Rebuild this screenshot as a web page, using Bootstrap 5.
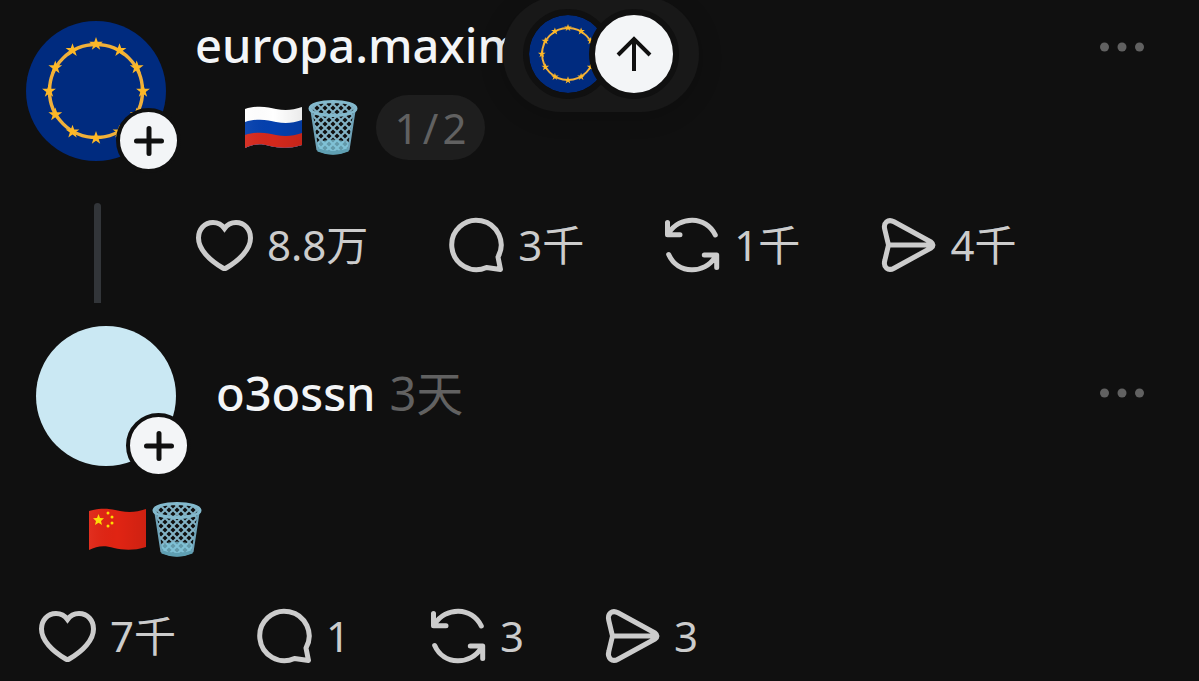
<!DOCTYPE html>
<html lang="zh-CN" data-bs-theme="dark">
<head>
<meta charset="utf-8">
<meta name="viewport" content="width=device-width, initial-scale=1">
<title>europa.maxim</title>
<link href="https://cdn.jsdelivr.net/npm/bootstrap@5.3.0/dist/css/bootstrap.min.css" rel="stylesheet">
<style>
  body { background: #101010; color: #f3f5f7; font-family: "Noto Sans", "Noto Sans CJK SC", sans-serif; overflow-x: hidden; }
  .post { padding: 21px 47px 0 26px; }
  .reply { padding: 23px 47px 0 36px; }
  .avatar { width: 140px; height: 140px; flex: none; }
  .avatar > svg, .avatar-plain { width: 140px; height: 140px; display: block; border-radius: 50%; }
  .avatar-plain { background: #cae8f3; }
  .follow { right: -15px; bottom: -12px; width: 65px; height: 65px; border: 4px solid #101010; background: #f3f5f7; border-radius: 50%; color: #101010; }
  .thread-line { width: 7px; margin: 42px 0 0 68px; background: #323539; border-radius: 4px 4px 0 0; }
  .post-body { padding: 0 0 28px 29px; }
  .handle, .age { font-size: 47px; line-height: 48px; }
  .handle { color: #f3f5f7; font-weight: 500; text-decoration: none; }
  .age { color: #616161; margin-left: 14px; }
  .more { height: 52px; color: #616161; }
  .reply-head { padding: 0 0 6px 40px; }
  .emoji-row { gap: 6px; height: 65px; }
  .post .emoji-row { margin: 22px 0 55px; padding-left: 50px; }
  .reply .emoji-row { margin: 31px 0 44px; padding-left: 53px; }
  .counter { background: #1e1e1e; color: #616161; font-size: 42px; line-height: 65px; width: 109px; margin-left: 12px; }
  .actions { gap: 78px; height: 60px; }
  .reply .actions { padding-left: 2px; }
  .action { color: #ccc; font-size: 42px; line-height: 60px; gap: 12px; }
  .action svg { width: 60px; height: 60px; fill: none; stroke: currentColor; stroke-width: 5; stroke-linecap: round; stroke-linejoin: round; flex: none; }
  .jump { top: -4px; left: 1px; height: 116px; padding: 0 20px; background: #181818; box-shadow: 0 4px 24px #0003; }
  .jump-disc { width: 90px; height: 90px; border: 6px solid #101010; border-radius: 50%; background: #101010; overflow: hidden; }
  .jump-disc svg { width: 78px; height: 78px; border-radius: 50%; display: block; }
  .jump-up { margin-left: -24px; background: #f3f5f7; color: #101010; }
</style>
</head>
<body>
<svg width="0" height="0" class="position-absolute" aria-hidden="true">
  <defs>
    <path id="star" fill="#fdb827" d="M0-7 1.7-2.2 6.9-2.2 2.7.9 4.2 5.8 0 2.8-4.2 5.8-2.7.9-6.9-2.2-1.7-2.2Z"/>
    <symbol id="eu" viewBox="0 0 140 140">
      <path fill="#002b7f" d="M0 0h140v140H0z"/>
      <circle cx="70" cy="70" r="46.500" fill="none" stroke="#f0b03a" stroke-width="3.500"/>
      <use href="#star" x="70" y="23"/><use href="#star" x="93.500" y="29.300"/><use href="#star" x="110.700" y="46.500"/>
      <use href="#star" x="117" y="70"/><use href="#star" x="110.700" y="93.500"/><use href="#star" x="93.500" y="110.700"/>
      <use href="#star" x="70" y="117"/><use href="#star" x="46.500" y="110.700"/><use href="#star" x="29.300" y="93.500"/>
      <use href="#star" x="23" y="70"/><use href="#star" x="29.300" y="46.500"/><use href="#star" x="46.500" y="29.300"/>
    </symbol>
    <symbol id="heart" viewBox="0 0 60 60"><path stroke-linejoin="miter" d="M29.500 13.500C26.500 9.200 22 7.500 18 7.500 9.500 7.500 3.500 14.300 3.500 23 3.500 34 14 45 27.800 53Q29.500 54 31.200 53C45 45 55.500 34 55.500 23 55.500 14.300 49.500 7.500 41 7.500 37 7.500 32.500 9.200 29.500 13.500Z"/></symbol>
    <symbol id="bubble" viewBox="0 0 60 60"><path d="M52 42A24.700 24.700 0 1 0 40.500 52.500L54.500 54.500Z"/></symbol>
    <symbol id="repost" viewBox="0 0 60 60"><path d="M5.500 7.500V19.800H18M6.500 18.500C17 .500 44.500 .500 53.300 20M54.700 52.500V40H42.300M53.500 41.500C43 59.500 15.500 59.500 6.700 39.500"/></symbol>
    <symbol id="send" viewBox="0 0 60 60"><path d="M10.500 30 6.800 14.500C5 8 10 3.500 16 6.800L53 27Q57 30 53 33L16 53.200C10 56.500 5 52 6.800 45.500ZM10.500 30H54"/></symbol>
    <pattern id="mesh" width="8" height="8" patternUnits="userSpaceOnUse" x="5"><path d="M-1-1 9 9M9-1-1 9" stroke="#83b3c6" stroke-width="2"/></pattern>
    <symbol id="bin" viewBox="0 0 50 56">
      <path d="M4 10 9.500 50Q25 57 40.500 50L46 10Z" fill="url(#mesh)"/>
      <path d="M8.500 43Q25 36 41.500 43L40.500 51Q25 58 9.500 51Z" fill="#7fc7dc" opacity=".75"/>
      <path d="M9 48Q25 54 41 48L40.500 51.500Q25 58 9.500 51.500Z" fill="#5f9fb2"/>
      <path d="M3.500 11 9.500 50M46.500 11 40.500 50" fill="none" stroke="#6fa3b8" stroke-width="2"/>
      <ellipse cx="25" cy="8.500" rx="23" ry="7" fill="#101010"/>
      <ellipse cx="25" cy="8.500" rx="23" ry="7" fill="url(#mesh)" stroke="#83b9cd" stroke-width="3"/>
    </symbol>
    <linearGradient id="wave"><stop offset="0" stop-color="#fff" stop-opacity=".05"/><stop offset=".5" stop-color="#000" stop-opacity="0"/><stop offset="1" stop-color="#000" stop-opacity=".08"/></linearGradient>
    <clipPath id="flag"><path d="M0 3C13-1 23 1 31 3 41 5 48 4 57 1V39C44 43 34 42 25 40 15 37 8 38 0 42Z"/></clipPath>
    <symbol id="more" viewBox="0 0 44 10"><g fill="currentColor"><circle cx="4.500" cy="5" r="4.500"/><circle cx="22" cy="5" r="4.500"/><circle cx="39.500" cy="5" r="4.500"/></g></symbol>
    <symbol id="plus" viewBox="0 0 30 30"><path d="M15 2.500V27.500M2.500 15H27.500" stroke="currentColor" stroke-width="5" stroke-linecap="round"/></symbol>
  </defs>
</svg>

<nav class="fixed-top d-flex justify-content-center pe-none" style="height:0">
  <div class="jump position-relative d-flex align-items-center rounded-pill pe-auto flex-shrink-0">
    <div class="jump-disc"><svg role="img" aria-label="europa.maxim"><use href="#eu"/></svg></div>
    <button type="button" class="jump-disc jump-up p-0 d-flex align-items-center justify-content-center" aria-label="回到顶部">
      <svg viewBox="0 0 78 78" fill="none" stroke="currentColor" stroke-width="4"><path d="M39 56V24M23 40 39 24 55 40"/></svg>
    </button>
  </div>
</nav>

<main>
  <article class="post d-flex">
    <div class="d-flex flex-column">
      <div class="avatar position-relative">
        <svg role="img" aria-label="europa.maxim"><use href="#eu"/></svg>
        <button type="button" class="follow position-absolute p-0 d-flex align-items-center justify-content-center" aria-label="关注"><svg width="30" height="30"><use href="#plus"/></svg></button>
      </div>
      <div class="thread-line flex-grow-1"></div>
    </div>
    <div class="post-body flex-grow-1">
      <header class="d-flex justify-content-between align-items-start">
        <a href="#" class="handle">europa.maxim</a>
        <button type="button" class="more btn border-0 p-0 pe-2 d-flex align-items-center" aria-label="更多"><svg width="44" height="10"><use href="#more"/></svg></button>
      </header>
      <div class="emoji-row d-flex align-items-center">
        <svg width="57" height="43" role="img" aria-label="俄罗斯国旗"><g clip-path="url(#flag)"><path fill="#fff" d="M0 0h57v43H0z"/><path fill="#0440ae" d="M0 16C13 12 23 14 31 16 41 18 48 17 57 14V43H0Z"/><path fill="#d5281c" d="M0 29C13 25 23 27 31 29 41 31 48 30 57 27V43H0Z"/><path fill="url(#wave)" d="M0 0h57v43H0z"/></g></svg>
        <svg width="50" height="56" role="img" aria-label="垃圾桶"><use href="#bin"/></svg>
        <span class="counter rounded-pill text-center">1&#8202;/&#8202;2</span>
      </div>
      <div class="actions d-flex align-items-center">
        <button type="button" class="action btn border-0 p-0 d-flex align-items-center" aria-label="赞 8.8万"><svg><use href="#heart"/></svg>8.8万</button>
        <button type="button" class="action btn border-0 p-0 d-flex align-items-center" aria-label="回复 3千"><svg><use href="#bubble"/></svg>3千</button>
        <button type="button" class="action btn border-0 p-0 d-flex align-items-center" aria-label="转发 1千"><svg><use href="#repost"/></svg>1千</button>
        <button type="button" class="action btn border-0 p-0 d-flex align-items-center" aria-label="分享 4千"><svg><use href="#send"/></svg>4千</button>
      </div>
    </div>
  </article>

  <article class="reply">
    <header class="d-flex align-items-center">
      <div class="avatar position-relative">
        <div class="avatar-plain"></div>
        <button type="button" class="follow position-absolute p-0 d-flex align-items-center justify-content-center" aria-label="关注"><svg width="30" height="30"><use href="#plus"/></svg></button>
      </div>
      <div class="reply-head d-flex flex-grow-1 align-items-center">
        <a href="#" class="handle">o3ossn</a>
        <time class="age">3天</time>
        <button type="button" class="more btn border-0 p-0 pe-2 ms-auto d-flex align-items-center" aria-label="更多"><svg width="44" height="10"><use href="#more"/></svg></button>
      </div>
    </header>
    <div class="emoji-row d-flex align-items-center">
      <svg width="57" height="43" role="img" aria-label="中国国旗"><g clip-path="url(#flag)"><path fill="#e02413" d="M0 0h57v43H0z"/><g fill="#ffde02"><path d="M9.500 6 11 10 15 10.300 12 13 13 17 9.500 14.700 6 17 7 13 4 10.300 8 10Z"/><circle cx="19" cy="5" r="1.500"/><circle cx="23" cy="9" r="1.500"/><circle cx="23" cy="15" r="1.500"/><circle cx="19" cy="18" r="1.500"/></g><path fill="url(#wave)" d="M0 0h57v43H0z"/></g></svg>
      <svg width="50" height="56" role="img" aria-label="垃圾桶"><use href="#bin"/></svg>
    </div>
    <div class="actions d-flex align-items-center">
      <button type="button" class="action btn border-0 p-0 d-flex align-items-center" aria-label="赞 7千"><svg><use href="#heart"/></svg>7千</button>
      <button type="button" class="action btn border-0 p-0 d-flex align-items-center" aria-label="回复 1"><svg><use href="#bubble"/></svg>1</button>
      <button type="button" class="action btn border-0 p-0 d-flex align-items-center" aria-label="转发 3"><svg><use href="#repost"/></svg>3</button>
      <button type="button" class="action btn border-0 p-0 d-flex align-items-center" aria-label="分享 3"><svg><use href="#send"/></svg>3</button>
    </div>
  </article>
</main>
<script src="https://cdn.jsdelivr.net/npm/bootstrap@5.3.0/dist/js/bootstrap.bundle.min.js"></script>
</body>
</html>
